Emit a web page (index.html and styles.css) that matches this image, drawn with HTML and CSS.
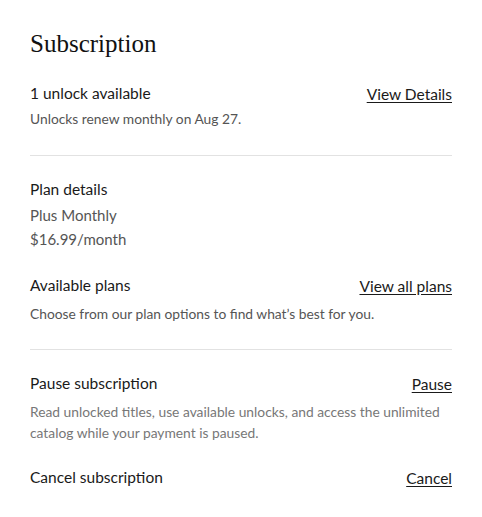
FILE: index.html
```html
<!DOCTYPE html>
<html>
<head>
    <title>Subscription</title>
    <link rel="stylesheet" href="styles.css">
</head>
<body>
    <div class="account">
        <h1>Subscription</h1>

        <div class="section">
            <div class="row">
                <div class="label">1 unlock available</div>
                <a href="#" class="link">View Details</a>
            </div>
            <p class="note first">Unlocks renew monthly on Aug 27.</p>
        </div>

        <div class="section">
            <div class="label">Plan details</div>
            <div class="plan">
                <div>Plus Monthly</div>
                <div>$16.99/month</div>
            </div>

            <div class="row spaced">
                <div class="label">Available plans</div>
                <a href="#" class="link">View all plans</a>
            </div>
            <p class="note">Choose from our plan options to find what’s best for you.</p>
        </div>

        <div class="section last">
            <div class="row">
                <div class="label">Pause subscription</div>
                <a href="#" class="link">Pause</a>
            </div>
            <p class="note light">Read unlocked titles, use available unlocks, and access the unlimited catalog while your payment is paused.</p>

            <div class="row spaced">
                <div class="label">Cancel subscription</div>
                <a href="#" class="link">Cancel</a>
            </div>
        </div>
    </div>
</body>
</html>
```

FILE: styles.css
```css
body {
    margin: 0;
    background-color: #fff;
    font-family: Lato, "Noto Sans", sans-serif;
    color: #1a1a1a;
}

.account {
    padding: 28px 30px 16px 30px;
}

.account h1 {
    font-family: "Liberation Serif", serif;
    font-weight: normal;
    font-size: 25px;
    line-height: 32px;
    margin: 0 0 23px 0;
    color: #111;
}

.section {
    border-bottom: 1px solid #e2e2e2;
    padding-bottom: 25px;
    margin-bottom: 23px;
}

.section:first-of-type {
    padding-bottom: 26px;
}

.section.last {
    border-bottom: none;
    padding-bottom: 0;
    margin-bottom: 0;
}

.row {
    display: flex;
    justify-content: space-between;
    align-items: flex-start;
}

.row.spaced {
    margin-top: 24px;
}

.label {
    font-size: 15.5px;
    line-height: 20px;
}

.link {
    font-size: 15.5px;
    line-height: 20px;
    padding-top: 1px;
    color: #1a1a1a;
    text-decoration: underline;
    text-underline-offset: 2px;
}

.note {
    font-size: 13.8px;
    line-height: 21px;
    color: #555;
    margin: 7px 0 0 0;
}

.note.first {
    margin-top: 4px;
}

.note.light {
    color: #777;
}

.plan {
    font-size: 15px;
    line-height: 23.5px;
    color: #555;
    margin-top: 5px;
}
```
